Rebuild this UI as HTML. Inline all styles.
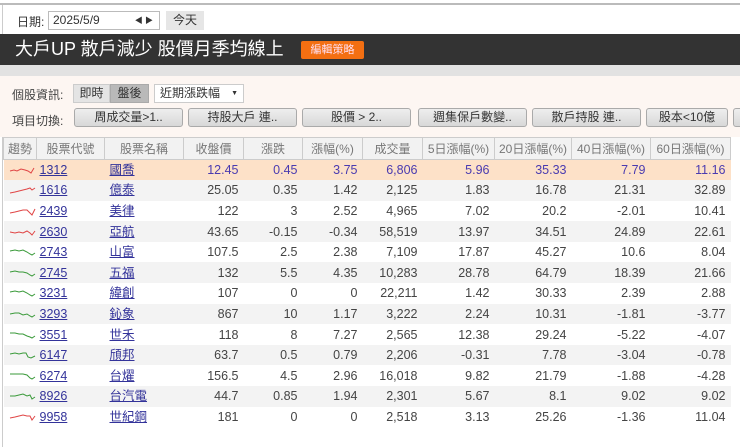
<!DOCTYPE html>
<html><head><meta charset="utf-8"><style>
*{margin:0;padding:0;box-sizing:border-box}
body{width:740px;height:447px;overflow:hidden;background:#fff;font-family:"Liberation Sans","Noto Sans CJK TC",sans-serif;font-size:12px;color:#444;position:relative}
.a{position:absolute}
.btn{position:absolute;top:108px;height:19px;background:linear-gradient(#eee,#d8d8d8);border:1px solid #aaa;border-radius:3px;text-align:center;line-height:17px;font-size:12px;color:#333}
table{position:absolute;left:3px;top:137px;border-collapse:collapse;width:728px}
th{height:22px;font-weight:normal;color:#777;border:1px solid #ccc;background:#f2f2f2;font-size:12px;line-height:14px}
td{height:20.6px;text-align:right;padding-right:5px;font-size:12.5px;white-space:nowrap;line-height:14px;vertical-align:middle}
td.l{text-align:left;padding-left:3px}
td a{color:#33339a;text-decoration:underline}
tr.h td{background:#fde1c8;color:#4a3bb0}
tr.g td{background:#f3f3f3}
td.s{padding:0 0 0 5px;text-align:left}
td svg{display:block}
</style></head><body>
<div class="a" style="left:0;top:3px;width:740px;height:2px;background:#bbb"></div>
<div class="a" style="left:2px;top:5px;width:1px;height:442px;background:#ccc"></div>
<div class="a" style="left:17px;top:13px;font-size:12px;color:#333">日期:</div>
<div class="a" style="left:48px;top:11px;width:112px;height:19px;border:1px solid #bbb;padding-left:4px;line-height:17px;color:#333">2025/5/9<span style="position:absolute;right:6px;font-size:8px">◀ ▶</span></div>
<div class="a" style="left:166px;top:11px;width:38px;height:19px;background:#e6e6e6;text-align:center;line-height:19px;color:#333">今天</div>
<div class="a" style="left:0;top:34px;width:740px;height:31px;background:#333"></div>
<div class="a" style="left:15px;top:38px;font-size:18px;color:#fff;line-height:22px">大戶UP 散戶減少 股價月季均線上</div>
<div class="a" style="left:301px;top:41px;width:63px;height:18px;background:#f36f12;border-radius:2px;color:#fde;font-size:11px;text-align:center;line-height:18px">編輯策略</div>
<div class="a" style="left:0;top:65px;width:740px;height:11px;background:#e2e2e2"></div>
<div class="a" style="left:0;top:76px;width:740px;height:61px;background:#fdf6f2"></div>
<div class="a" style="left:12px;top:86px;color:#444">個股資訊:</div>
<div class="a" style="left:73px;top:84px;width:37px;height:19px;background:#e4e4e4;border:1px solid #ccc;text-align:center;line-height:17px;color:#333">即時</div>
<div class="a" style="left:110px;top:84px;width:39px;height:19px;background:#b9b9b9;border:1px solid #aaa;text-align:center;line-height:17px;color:#333">盤後</div>
<div class="a" style="left:154px;top:84px;width:90px;height:19px;background:#fff;border:1px solid #ccc;padding-left:5px;line-height:17px;color:#333">近期漲跌幅<span style="position:absolute;right:5px;font-size:7px">▼</span></div>
<div class="a" style="left:12px;top:112px;color:#444">項目切換:</div>
<div class="btn" style="left:74px;width:109px">周成交量&gt;1..</div>
<div class="btn" style="left:188px;width:109px">持股大戶 連..</div>
<div class="btn" style="left:302px;width:109px;text-align:right;padding-right:28px">股價 &gt; 2..</div>
<div class="btn" style="left:418px;width:109px">週集保戶數變..</div>
<div class="btn" style="left:532px;width:109px">散戶持股 連..</div>
<div class="btn" style="left:646px;width:82px">股本&lt;10億</div>
<div class="btn" style="left:733px;width:20px"></div>
<table>
<tr><th style="width:33px">趨勢</th><th style="width:68px">股票代號</th><th style="width:79px">股票名稱</th><th style="width:60px">收盤價</th><th style="width:59px">漲跌</th><th style="width:60px">漲幅(%)</th><th style="width:60px">成交量</th><th style="width:72px">5日漲幅(%)</th><th style="width:77px">20日漲幅(%)</th><th style="width:79px">40日漲幅(%)</th><th style="width:80px">60日漲幅(%)</th></tr>
<tr class="h"><td class="s"><svg width="27" height="10"><path d="M1 6 L5 5 L8 6 L12 4 L16 5 L19 6 L22 8 L25 3" fill="none" stroke="#e04545" stroke-width="1"/></svg></td><td class="l"><a>1312</a></td><td class="l" style="padding-left:5px"><a>國喬</a></td><td>12.45</td><td>0.45</td><td>3.75</td><td>6,806</td><td>5.96</td><td>35.33</td><td>7.79</td><td>11.16</td></tr>
<tr class="g"><td class="s"><svg width="27" height="10"><path d="M1 8 L6 7 L10 6 L14 5 L18 4 L21 3 L23 5 L26 3" fill="none" stroke="#e04545"/></svg></td><td class="l"><a>1616</a></td><td class="l" style="padding-left:5px"><a>億泰</a></td><td>25.05</td><td>0.35</td><td>1.42</td><td>2,125</td><td>1.83</td><td>16.78</td><td>21.31</td><td>32.89</td></tr>
<tr><td class="s"><svg width="27" height="10"><path d="M1 7 L6 6 L10 5 L14 4 L18 4 L21 7 L23 9 L26 3" fill="none" stroke="#e04545"/></svg></td><td class="l"><a>2439</a></td><td class="l" style="padding-left:5px"><a>美律</a></td><td>122</td><td>3</td><td>2.52</td><td>4,965</td><td>7.02</td><td>20.2</td><td>-2.01</td><td>10.41</td></tr>
<tr class="g"><td class="s"><svg width="27" height="10"><path d="M1 5 L6 6 L10 5 L14 6 L18 4 L21 6 L23 8 L26 4" fill="none" stroke="#e04545"/></svg></td><td class="l"><a>2630</a></td><td class="l" style="padding-left:5px"><a>亞航</a></td><td>43.65</td><td>-0.15</td><td>-0.34</td><td>58,519</td><td>13.97</td><td>34.51</td><td>24.89</td><td>22.61</td></tr>
<tr><td class="s"><svg width="27" height="10"><path d="M1 4 L6 3 L10 4 L14 3 L18 5 L21 7 L23 8 L26 6" fill="none" stroke="#3a9a3a"/></svg></td><td class="l"><a>2743</a></td><td class="l" style="padding-left:5px"><a>山富</a></td><td>107.5</td><td>2.5</td><td>2.38</td><td>7,109</td><td>17.87</td><td>45.27</td><td>10.6</td><td>8.04</td></tr>
<tr class="g"><td class="s"><svg width="27" height="10"><path d="M1 4 L6 3 L10 4 L14 4 L18 5 L21 7 L23 8 L26 6" fill="none" stroke="#3a9a3a"/></svg></td><td class="l"><a>2745</a></td><td class="l" style="padding-left:5px"><a>五福</a></td><td>132</td><td>5.5</td><td>4.35</td><td>10,283</td><td>28.78</td><td>64.79</td><td>18.39</td><td>21.66</td></tr>
<tr><td class="s"><svg width="27" height="10"><path d="M1 4 L6 3 L10 4 L14 3 L18 5 L21 7 L23 8 L26 6" fill="none" stroke="#3a9a3a"/></svg></td><td class="l"><a>3231</a></td><td class="l" style="padding-left:5px"><a>緯創</a></td><td>107</td><td>0</td><td>0</td><td>22,211</td><td>1.42</td><td>30.33</td><td>2.39</td><td>2.88</td></tr>
<tr class="g"><td class="s"><svg width="27" height="10"><path d="M1 5 L6 4 L10 4 L14 6 L18 5 L21 7 L23 8 L26 6" fill="none" stroke="#3a9a3a"/></svg></td><td class="l"><a>3293</a></td><td class="l" style="padding-left:5px"><a>鈊象</a></td><td>867</td><td>10</td><td>1.17</td><td>3,222</td><td>2.24</td><td>10.31</td><td>-1.81</td><td>-3.77</td></tr>
<tr><td class="s"><svg width="27" height="10"><path d="M1 3 L6 3 L10 4 L14 4 L18 6 L21 7 L23 8 L26 6" fill="none" stroke="#3a9a3a"/></svg></td><td class="l"><a>3551</a></td><td class="l" style="padding-left:5px"><a>世禾</a></td><td>118</td><td>8</td><td>7.27</td><td>2,565</td><td>12.38</td><td>29.24</td><td>-5.22</td><td>-4.07</td></tr>
<tr class="g"><td class="s"><svg width="27" height="10"><path d="M1 4 L6 3 L10 4 L14 3 L17 3 L19 7 L22 8 L26 6" fill="none" stroke="#3a9a3a"/></svg></td><td class="l"><a>6147</a></td><td class="l" style="padding-left:5px"><a>頎邦</a></td><td>63.7</td><td>0.5</td><td>0.79</td><td>2,206</td><td>-0.31</td><td>7.78</td><td>-3.04</td><td>-0.78</td></tr>
<tr><td class="s"><svg width="27" height="10"><path d="M1 3 L6 3 L10 3 L14 3 L18 4 L21 7 L23 8 L26 6" fill="none" stroke="#3a9a3a"/></svg></td><td class="l"><a>6274</a></td><td class="l" style="padding-left:5px"><a>台燿</a></td><td>156.5</td><td>4.5</td><td>2.96</td><td>16,018</td><td>9.82</td><td>21.79</td><td>-1.88</td><td>-4.28</td></tr>
<tr class="g"><td class="s"><svg width="27" height="10"><path d="M1 5 L6 5 L10 4 L14 3 L18 5 L21 4 L23 8 L26 6" fill="none" stroke="#3a9a3a"/></svg></td><td class="l"><a>8926</a></td><td class="l" style="padding-left:5px"><a>台汽電</a></td><td>44.7</td><td>0.85</td><td>1.94</td><td>2,301</td><td>5.67</td><td>8.1</td><td>9.02</td><td>9.02</td></tr>
<tr><td class="s"><svg width="27" height="10"><path d="M1 6 L6 5 L10 4 L14 3 L18 4 L21 4 L23 8 L26 4" fill="none" stroke="#e04545"/></svg></td><td class="l"><a>9958</a></td><td class="l" style="padding-left:5px"><a>世紀鋼</a></td><td>181</td><td>0</td><td>0</td><td>2,518</td><td>3.13</td><td>25.26</td><td>-1.36</td><td>11.04</td></tr>
</table>
</body></html>
